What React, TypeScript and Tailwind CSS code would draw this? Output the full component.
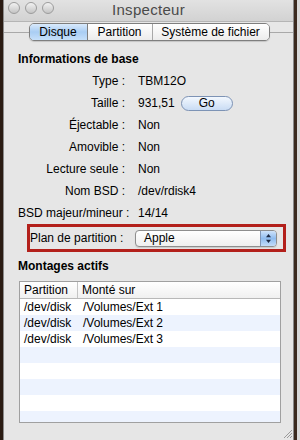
import React from "react";

const font = { fontFamily: '"Liberation Sans", Arial, sans-serif' };

function Row({ label, children }: { label: string; children: React.ReactNode }) {
  return (
    <div className="grid grid-cols-[107px_1fr] gap-x-[13px] h-[22px] items-center">
      <div className="text-right whitespace-nowrap">{label} :</div>
      <div className="flex items-center whitespace-nowrap">{children}</div>
    </div>
  );
}

export default function App() {
  const mounts = [
    ["/dev/disk", "/Volumes/Ext 1"],
    ["/dev/disk", "/Volumes/Ext 2"],
    ["/dev/disk", "/Volumes/Ext 3"],
    ["", ""],
    ["", ""],
    ["", ""],
    ["", ""],
    ["", ""],
  ];
  return (
    <div style={font} className="w-[300px] h-[440px] overflow-hidden flex bg-[#2e1f16] text-[12px] text-black leading-[14px]">
      <div className="w-[3px] bg-[#2a1b13]" />
      <div className="w-[291px] flex flex-col bg-[#e7e7e7] border-x border-[#8a8a8a]">
        {/* title bar */}
        <div className="h-[22px] grid grid-cols-[1fr_auto_1fr] bg-gradient-to-b from-[#e2e2e2] to-[#d2d2d2] border-b border-[#b5b5b5]">
          <div className="flex gap-[5px] pl-[4px] pt-[2px]">
            {[0, 1, 2].map((i) => (
              <div
                key={i}
                className="w-[12px] h-[12px] rounded-full border border-[#9c9c9c] bg-gradient-to-b from-[#f2f2f2] to-[#c4c4c4]"
              />
            ))}
          </div>
          <div className="text-[15px] leading-[22px] text-[#4a4a4a] tracking-[0.3px] -mt-[1px]">Inspecteur</div>
          <div />
        </div>
        {/* tabs */}
        <div className="pt-[1px] flex justify-center relative z-10">
          <div className="ml-[1px] h-[18px] flex rounded-[5px] border border-[#7e7e7e] overflow-hidden shadow-[0_1px_1px_rgba(0,0,0,0.15)]">
            <div className="w-[58px] flex items-center justify-center bg-gradient-to-b from-[#d9eafc] via-[#a9cdf3] to-[#c6e0fa] border-r border-[#7e7e7e]">
              Disque
            </div>
            <div className="w-[65px] flex items-center justify-center bg-gradient-to-b from-[#ffffff] to-[#ececec] border-r border-[#a8a8a8]">
              Partition
            </div>
            <div className="w-[116px] flex items-center justify-center bg-gradient-to-b from-[#ffffff] to-[#ececec]">
              Système de fichier
            </div>
          </div>
        </div>
        <div className="-mt-[9px] border-t border-[#a9a9a9] flex-1 bg-[#e6e6e6] px-[14px] pt-[19px]">
          <div className="font-bold h-[14px]">Informations de base</div>
          <div className="mt-[4px]">
            <Row label="Type">TBM12O</Row>
            <Row label="Taille">
              <span>931,51</span>
              <div className="ml-[6px] w-[52px] h-[15px] rounded-full border border-[#7d93b5] bg-gradient-to-b from-[#f3f8fe] to-[#c9dcf4] flex items-center justify-center">
                Go
              </div>
            </Row>
            <Row label="Éjectable">Non</Row>
            <Row label="Amovible">Non</Row>
            <Row label="Lecture seule">Non</Row>
            <Row label="Nom BSD">/dev/rdisk4</Row>
            <Row label="BSD majeur/mineur">14/14</Row>
          </div>
          {/* highlighted row */}
          <div className="ml-[9px] -mr-[7px] h-[28px] border-[3px] border-[#b3201b] grid grid-cols-[92px_1fr] gap-x-[13px] items-center pr-[6px]">
            <div className="text-right whitespace-nowrap">Plan de partition :</div>
            <div className="h-[17px] flex rounded-[4px] border border-[#8e8e8e] overflow-hidden bg-gradient-to-b from-[#ffffff] to-[#efefef] shadow-[0_1px_1px_rgba(0,0,0,0.12)]">
              <div className="flex-1 pl-[8px] flex items-center">Apple</div>
              <div className="w-[16px] border-l border-[#8196b6] bg-gradient-to-b from-[#cfe3fa] via-[#8fbcef] to-[#c3dcf8] flex items-center justify-center">
                <svg width="7" height="11" viewBox="0 0 7 11">
                  <path d="M3.5 1 L6 4.2 H1 Z" fill="#1d2b45" />
                  <path d="M3.5 10 L6 6.8 H1 Z" fill="#1d2b45" />
                </svg>
              </div>
            </div>
          </div>
          <div className="font-bold h-[14px] mt-[7px]">Montages actifs</div>
          <div className="mt-[8px] ml-[1px] w-[262px] h-[142px] border border-[#a0a0a0] bg-white flex flex-col overflow-hidden">
            <div className="h-[17px] shrink-0 flex border-b border-[#b8b8b8] bg-gradient-to-b from-[#ffffff] to-[#f0f0f0]">
              <div className="w-[58px] pl-[4px] flex items-center border-r border-[#c4c4c4]">Partition</div>
              <div className="pl-[4px] flex items-center">Monté sur</div>
            </div>
            {mounts.map(([a, b], i) => (
              <div
                key={i}
                className={`h-[16px] shrink-0 flex items-center ${i % 2 === 1 ? "bg-[#edf3fe]" : "bg-white"}`}
              >
                <div className="w-[59px] pl-[4px] whitespace-nowrap overflow-hidden">{a}</div>
                <div className="pl-[4px] whitespace-nowrap">{b}</div>
              </div>
            ))}
          </div>
          <div className="flex justify-end -mr-[14px] mt-[5px]">
            <svg width="11" height="11" viewBox="0 0 11 11">
              <path d="M10 2 L2 10 M10 5 L5 10 M10 8 L8 10" stroke="#9a9a9a" strokeWidth="1" />
            </svg>
          </div>
        </div>
      </div>
      <div className="w-[3px] bg-[#3b2a1f]" />
      <div className="w-[3px] bg-[#d9d9d9]" />
    </div>
  );
}
